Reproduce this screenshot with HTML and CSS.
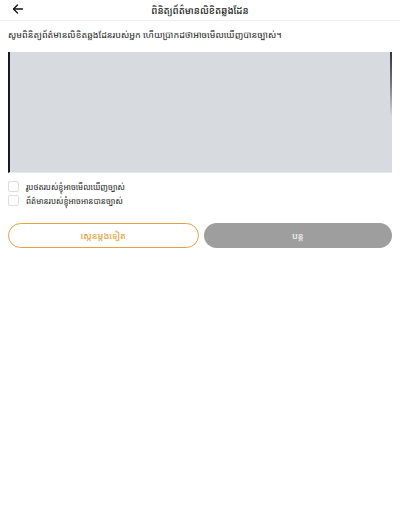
FILE: index.html
```html
<!DOCTYPE html>
<html lang="km">
<head>
  <meta charset="UTF-8">
  <meta name="viewport" content="width=device-width, initial-scale=1.0">
  <title>ពិនិត្យព័ត៌មានលិខិតឆ្លងដែន</title>
  <link rel="stylesheet" href="styles.css">
</head>
<body>
  <div class="header">
    <button class="back-btn" aria-label="back">
      <svg width="12" height="12" viewBox="0 0 24 24" fill="none" stroke="#111" stroke-width="2.6" stroke-linecap="round" stroke-linejoin="round">
        <path d="M21 12H4"/>
        <path d="M11 4l-8 8 8 8"/>
      </svg>
    </button>
    <h1>ពិនិត្យព័ត៌មានលិខិតឆ្លងដែន</h1>
  </div>

  <div class="container">
    <p class="intro">សូមពិនិត្យព័ត៌មានលិខិតឆ្លងដែនរបស់អ្នក ហើយប្រាកដថាអាចមើលឃើញបានច្បាស់។</p>

    <div class="preview">
      <span class="edge-right"></span>
    </div>

    <div class="checks">
      <label class="check-row">
        <span class="check-box"></span>
        <span>រូបថតរបស់ខ្ញុំអាចមើលឃើញច្បាស់</span>
      </label>
      <label class="check-row">
        <span class="check-box"></span>
        <span>ព័ត៌មានរបស់ខ្ញុំអាចអានបានច្បាស់</span>
      </label>
    </div>

    <div class="action-buttons">
      <button class="btn btn-outline">ស្កេនម្តងទៀត</button>
      <button class="btn btn-disabled">បន្ត</button>
    </div>
  </div>
</body>
</html>
```

FILE: styles.css
```css
:root {
  --accent: #e3a341;
  --text: #222;
  --muted-bg: #d7dadf;
}

body {
  margin: 0;
  font-family: "Noto Sans Khmer", "Khmer OS", "Noto Sans", sans-serif;
  background: #fff;
  color: var(--text);
}

.header {
  position: relative;
  height: 20px;
  display: flex;
  align-items: center;
  justify-content: center;
  border-bottom: 1px solid #eee;
}

.header h1 {
  margin: 0;
  font-size: 9.5px;
  font-weight: 500;
}

.back-btn {
  position: absolute;
  left: 12px;
  top: 3px;
  background: none;
  border: none;
  padding: 0;
  width: 12px;
  height: 12px;
  display: flex;
}

.container {
  padding: 0 8px;
}

.intro {
  margin: 7px 0 0;
  font-size: 9px;
  line-height: 14px;
}

.preview {
  position: relative;
  margin-top: 10px;
  height: 120px;
  background: var(--muted-bg);
  border-left: 2px solid #1a1a1a;
  border-bottom: 1px solid #e3ebee;
}

.edge-right {
  position: absolute;
  right: 0;
  top: 0;
  width: 2px;
  height: 65px;
  background: linear-gradient(#333, #777 50%, rgba(180,180,180,0));
}

.checks {
  margin-top: 8px;
  display: flex;
  flex-direction: column;
  gap: 3px;
}

.check-row {
  display: flex;
  align-items: center;
  gap: 7px;
  font-size: 8px;
  line-height: 11px;
}

.check-box {
  width: 9px;
  height: 9px;
  border: 1px solid #ddd;
  border-radius: 2px;
  background: #fff;
}

.action-buttons {
  display: flex;
  gap: 5px;
  margin-top: 17px;
}

.btn {
  flex: 1;
  height: 25px;
  border-radius: 13px;
  font-family: inherit;
  font-size: 9px;
  font-weight: 500;
  padding: 0;
}

.btn-outline {
  background: #fff;
  color: var(--accent);
  border: 1px solid var(--accent);
}

.btn-disabled {
  background: #9e9e9e;
  color: #f2f2f2;
  border: none;
}
```
